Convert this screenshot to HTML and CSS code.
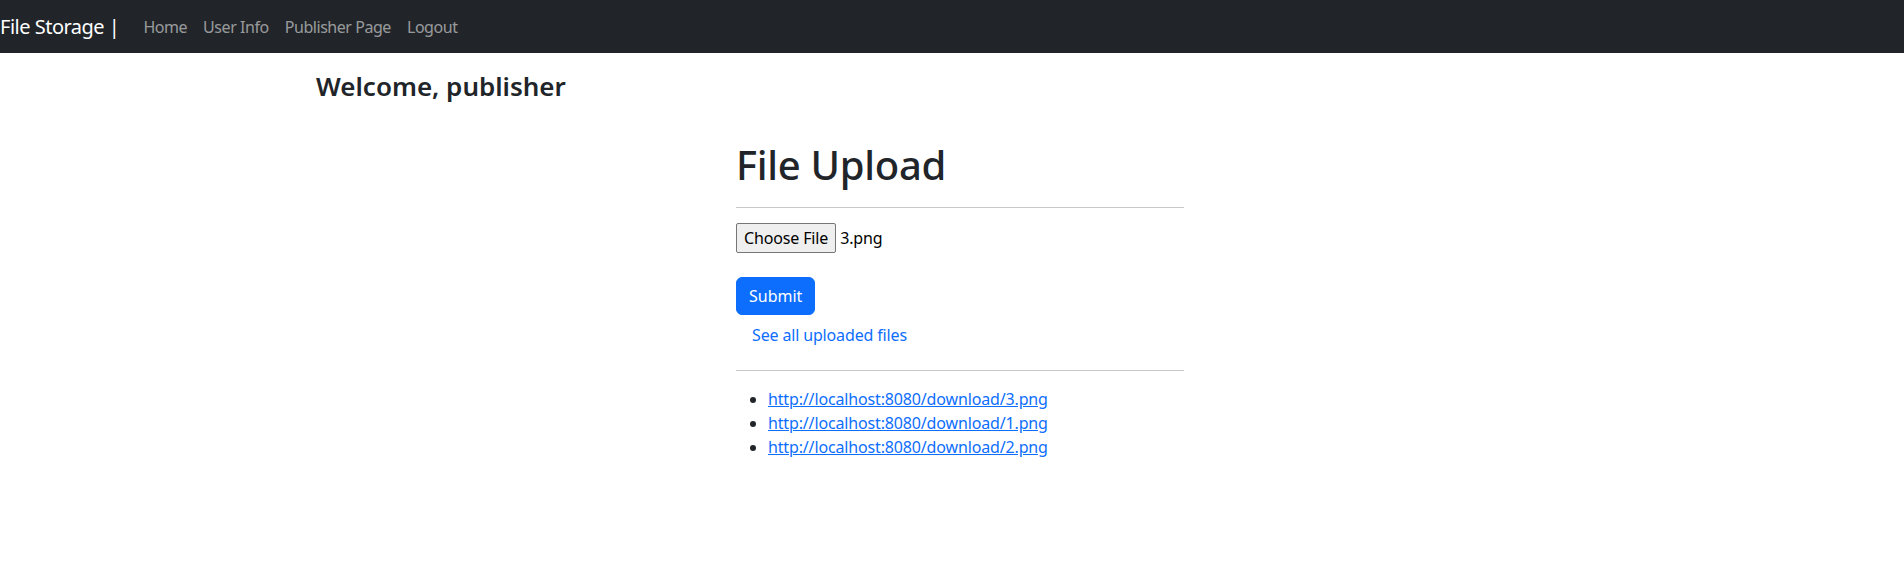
FILE: index.html
```html
<!DOCTYPE html>
<html lang="en">
<head>
<meta charset="utf-8">
<title>File Storage</title>
<link rel="stylesheet" href="styles.css">
</head>
<body>
<nav class="navbar">
  <a class="brand" href="#">File Storage |</a>
  <ul class="nav">
    <li><a class="nav-link" href="#">Home</a></li>
    <li><a class="nav-link" href="#">User Info</a></li>
    <li><a class="nav-link" href="#">Publisher Page</a></li>
    <li><a class="nav-link" href="#">Logout</a></li>
  </ul>
</nav>
<main class="page">
  <h4 class="welcome">Welcome, publisher</h4>
  <section class="upload">
    <h1 class="title">File Upload</h1>
    <hr class="rule">
    <form class="upload-form">
      <div class="file-field">
        <span class="file-btn">Choose File</span>
        <span class="file-name">3.png</span>
      </div>
      <button class="btn-primary" type="button">Submit</button>
    </form>
    <a class="see-all" href="#">See all uploaded files</a>
    <hr class="rule rule-lower">
    <ul class="files">
      <li><a href="#">http://localhost:8080/download/3.png</a></li>
      <li><a href="#">http://localhost:8080/download/1.png</a></li>
      <li><a href="#">http://localhost:8080/download/2.png</a></li>
    </ul>
  </section>
</main>
</body>
</html>
```
FILE: styles.css
```css
* { box-sizing: border-box; }
html, body { margin: 0; padding: 0; }
body {
  font-family: "Noto Sans", "Open Sans", sans-serif;
  font-size: 16px;
  line-height: 24px;
  color: #212529;
  background: #fff;
  letter-spacing: -0.15px;
}
a { color: #0d6efd; }

.navbar {
  display: flex;
  align-items: center;
  height: 53px;
  background: #212529;
}
.brand {
  color: #fff;
  font-size: 20px;
  line-height: 30px;
  letter-spacing: -0.5px;
  text-decoration: none;
  margin-right: 16px;
}
.nav {
  display: flex;
  list-style: none;
  margin: 0;
  padding: 0;
}
.nav-link {
  display: block;
  padding: 8px 8px;
  letter-spacing: -0.45px;
  color: rgba(255,255,255,.55);
  text-decoration: none;
}

.page {
  width: 1272px;
  margin: 0 auto;
}
.welcome {
  margin: 0;
  padding-top: 17px;
  font-size: 26px;
  line-height: 32px;
  font-weight: 600;
  letter-spacing: 0;
}
.upload {
  width: 448px;
  margin-left: 420px;
  padding-top: 39px;
}
.title {
  margin: 0;
  font-size: 40px;
  line-height: 48px;
  font-weight: 500;
  letter-spacing: -0.3px;
}
.rule {
  margin: 18px 0 0;
  border: 0;
  border-top: 1px solid #c8c9ca;
}
.upload-form { margin-top: 15px; }
.file-field {
  display: flex;
  align-items: center;
  gap: 4px;
  height: 30px;
}
.file-btn {
  display: inline-block;
  height: 30px;
  padding: 0 7px;
  line-height: 28px;
  background: #efefef;
  border: 1px solid #767676;
  border-radius: 2px;
  color: #000;
}
.file-name { color: #000; }
.btn-primary {
  display: block;
  margin-top: 24px;
  height: 38px;
  padding: 6px 12px;
  font: inherit;
  line-height: 24px;
  color: #fff;
  background: #0d6efd;
  border: 1px solid #0d6efd;
  border-radius: 6px;
}
.see-all {
  display: inline-block;
  padding: 8px 16px;
  text-decoration: none;
}
.rule-lower { margin-top: 15px; }
.files {
  margin: 16px 0 0;
  padding-left: 32px;
}
.files li { line-height: 24px; }
```
